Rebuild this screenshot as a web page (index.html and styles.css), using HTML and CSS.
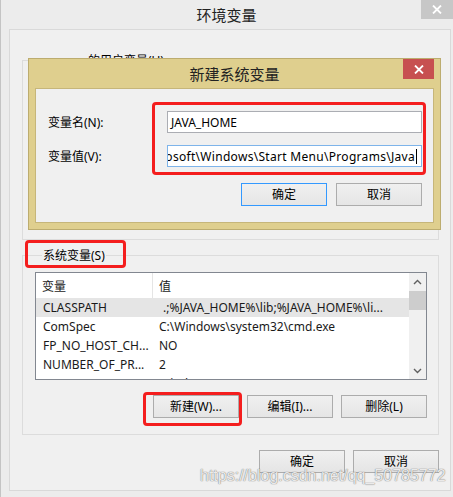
FILE: index.html
```html
<!DOCTYPE html>
<html lang="zh-CN">
<head>
<meta charset="utf-8">
<title>环境变量</title>
<link rel="stylesheet" href="styles.css">
</head>
<body>
<div class="window">
  <div class="titlebar">
    <span class="title">环境变量</span>
    <div class="win-close">
      <svg width="10" height="9" viewBox="0 0 10 9"><path d="M1 0.5L9 8.5M9 0.5L1 8.5" stroke="#fff" stroke-width="1.8" fill="none"/></svg>
    </div>
  </div>

  <div class="client">
    <div class="group user-group">
      <div class="group-title user-title">的用户变量(U)</div>
    </div>

    <div class="group sys-group">
      <div class="group-title">系统变量(S)</div>
      <div class="listview">
        <div class="lv-main">
          <div class="lv-header"><div class="c1">变量</div><div class="c2">值</div></div>
          <div class="lv-row sel"><div class="c1">CLASSPATH</div><div class="c2 cp">.;%JAVA_HOME%\lib;%JAVA_HOME%\li...</div></div>
          <div class="lv-row"><div class="c1">ComSpec</div><div class="c2">C:\Windows\system32\cmd.exe</div></div>
          <div class="lv-row"><div class="c1">FP_NO_HOST_CH...</div><div class="c2">NO</div></div>
          <div class="lv-row"><div class="c1">NUMBER_OF_PR...</div><div class="c2">2</div></div>
          <div class="lv-row"><div class="c1">OS</div><div class="c2">Windows_NT</div></div>
        </div>
        <div class="scrollbar">
          <div class="sb-btn"><svg width="9" height="6" viewBox="0 0 9 6"><path d="M1 5L4.5 1.5L8 5" stroke="#606060" stroke-width="1.4" fill="none"/></svg></div>
          <div class="sb-thumb"></div>
          <div class="sb-track"></div>
          <div class="sb-btn"><svg width="9" height="6" viewBox="0 0 9 6"><path d="M1 1L4.5 4.5L8 1" stroke="#606060" stroke-width="1.4" fill="none"/></svg></div>
        </div>
      </div>
      <div class="btn-row">
        <button class="btn">新建(W)...</button>
        <button class="btn">编辑(I)...</button>
        <button class="btn">删除(L)</button>
      </div>
    </div>

    <div class="btn-row bottom-row">
      <button class="btn">确定</button>
      <button class="btn">取消</button>
    </div>
  </div>

  <div class="dialog">
    <div class="dlg-title">
      <span class="title">新建系统变量</span>
      <div class="dlg-close">
        <svg width="10" height="9" viewBox="0 0 10 9"><path d="M1 0.5L9 8.5M9 0.5L1 8.5" stroke="#fff" stroke-width="1.8" fill="none"/></svg>
      </div>
    </div>
    <div class="dlg-body">
      <div class="form">
        <div class="label">变量名(N):</div>
        <div class="field">JAVA_HOME</div>
        <div class="label">变量值(V):</div>
        <div class="field focus"><span>C:\ProgramData\Microsoft\Windows\Start Menu\Programs\Java</span><span class="caret"></span></div>
      </div>
      <div class="btn-row dlg-buttons">
        <button class="btn default">确定</button>
        <button class="btn">取消</button>
      </div>
    </div>
  </div>

  <div class="hl hl1"></div>
  <div class="hl hl2"></div>
  <div class="hl hl3"></div>

  <div class="watermark">https://blog.csdn.net/qq_50785772</div>
</div>
</body>
</html>
```

FILE: styles.css
```css
* { box-sizing: border-box; }

body {
  margin: 0;
  width: 453px;
  height: 497px;
  overflow: hidden;
  background: #ececec;
  font-family: "Noto Sans", "Noto Sans CJK SC", sans-serif;
  font-size: 12px;
  color: #000;
}

.window {
  position: relative;
  height: 497px;
  box-shadow: inset 1px 0 #c4c4c4;
}

.titlebar {
  height: 29px;
  display: flex;
  justify-content: center;
  align-items: center;
}

.title {
  font-size: 15px;
  line-height: 20px;
  color: #222;
}

.win-close {
  position: absolute;
  top: 0;
  right: 0;
  width: 32px;
  height: 19px;
  background: #c7c7c7;
  display: flex;
  align-items: center;
  justify-content: center;
}

.client {
  margin-left: 9px;
  width: 442px;
  height: 462px;
  border: 1px solid #d9d9d9;
  background: #f0f0f0;
  padding: 30px 11px 0 12px;
}

.group {
  border: 1px solid #dcdcdc;
}

.group-title {
  margin: -9px 0 0 7px;
  padding: 0 1px;
  width: fit-content;
  line-height: 17px;
  background: #f0f0f0;
  white-space: nowrap;
}

.user-group { height: 180px; }
.user-title { margin-left: 64px; }

.sys-group {
  margin-top: 15px;
  padding: 0 11px 16px 12px;
}

.listview {
  margin-top: 8px;
  height: 108px;
  border: 1px solid #828790;
  background: #fff;
  display: flex;
}

.lv-main {
  flex: 1;
  overflow: hidden;
  color: #1a1a1a;
}

.lv-header {
  height: 25px;
  display: flex;
  align-items: stretch;
}

.lv-header .c1,
.lv-header .c2 {
  display: flex;
  align-items: center;
}

.lv-header .c1 { border-right: 1px solid #e5e5e5; }

.c1 {
  width: 117px;
  flex: none;
  padding-left: 6px;
  white-space: nowrap;
  overflow: hidden;
}

.c2 {
  flex: 1;
  padding-left: 6px;
  white-space: nowrap;
  overflow: hidden;
}

.lv-row {
  height: 19px;
  line-height: 19px;
  display: flex;
}

.lv-row .c1 { padding-left: 7px; }
.lv-row .cp { padding-left: 10px; }
.sel { background: #e5e5e5; }

.scrollbar {
  width: 17px;
  flex: none;
  background: #f0f0f0;
  display: flex;
  flex-direction: column;
}

.sb-btn {
  height: 17px;
  display: flex;
  align-items: center;
  justify-content: center;
}

.sb-thumb {
  margin-top: 1px;
  height: 19px;
  background: #cdcdcd;
}

.sb-track { flex: 1; }

.btn-row {
  display: flex;
  justify-content: flex-end;
  gap: 8px;
  margin-top: 15px;
}

.btn {
  width: 86px;
  height: 23px;
  padding: 0;
  border: 1px solid #acacac;
  background: linear-gradient(#f0f0f0, #e5e5e5);
  font-family: inherit;
  font-size: 12px;
  line-height: 16px;
  color: #000;
  display: flex;
  align-items: center;
  justify-content: center;
}

.btn.default { border-color: #3399ff; }

.dialog {
  position: absolute;
  left: 28px;
  top: 58px;
  width: 413px;
  height: 172px;
  background: #dfcf8e;
  border: 1px solid #bcac6f;
  padding: 0 6px 6px 6px;
  display: flex;
  flex-direction: column;
}

.dlg-title {
  position: relative;
  height: 29px;
  flex: none;
  display: flex;
  justify-content: center;
  align-items: center;
}

.dlg-close {
  position: absolute;
  top: 0;
  right: 0;
  width: 31px;
  height: 20px;
  background: #c75050;
  display: flex;
  align-items: center;
  justify-content: center;
}

.dlg-body {
  flex: 1;
  border: 1px solid #c6b67a;
  background: #f0f0f0;
  padding: 22px 11px 0 12px;
}

.form {
  display: grid;
  grid-template-columns: 1fr 255px;
  row-gap: 12px;
  align-items: center;
}

.label { white-space: nowrap; }

.field {
  height: 22px;
  border: 1px solid #abadb3;
  background: #fff;
  padding: 0 3px;
  display: flex;
  align-items: center;
  white-space: nowrap;
  overflow: hidden;
}

.field.focus {
  border-color: #7eb4ea;
  justify-content: flex-end;
  padding-right: 4px;
  letter-spacing: 0.3px;
}

.field span { flex: none; }

.caret {
  width: 1px;
  height: 15px;
  background: #000;
  margin-left: 1px;
}

.dlg-buttons {
  margin-top: 16px;
  gap: 9px;
}

.hl {
  position: absolute;
  border: 3px solid #f41e1e;
  border-radius: 4px;
}

.hl1 { left: 152px; top: 102px; width: 274px; height: 73px; }
.hl2 { left: 25px; top: 240px; width: 101px; height: 28px; }
.hl3 { left: 143px; top: 392px; width: 99px; height: 34px; }

.watermark {
  position: absolute;
  left: 200px;
  top: 466px;
  font-family: "Liberation Sans", sans-serif;
  font-size: 16px;
  line-height: 20px;
  color: rgba(255, 255, 255, 0.85);
  text-shadow: 0 0 1px rgba(110, 110, 110, 0.8), 0 0 1px rgba(110, 110, 110, 0.8);
  white-space: nowrap;
}
```
